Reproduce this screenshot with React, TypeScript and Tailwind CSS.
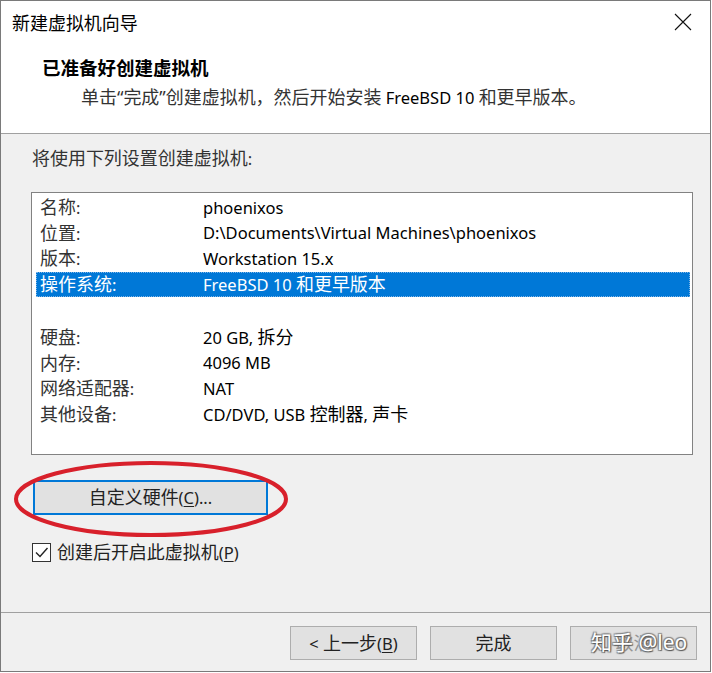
import React from "react";

const font = { fontFamily: '"Noto Sans", "Noto Sans CJK SC", sans-serif' };

function T({ s }: { s: string }) {
  const parts = s.split(/([\u3000-\u9fff\uff00-\uffef“”]+)/);
  return (
    <>
      {parts.map((p, i) =>
        /[\u3000-\u9fff\uff00-\uffef“”]/.test(p) ? (
          <span key={i} className="text-[1.09em]">
            {p}
          </span>
        ) : (
          <React.Fragment key={i}>{p}</React.Fragment>
        )
      )}
    </>
  );
}

const rows: ([string, string] | null)[] = [
  ["名称:", "phoenixos"],
  ["位置:", "D:\\Documents\\Virtual Machines\\phoenixos"],
  ["版本:", "Workstation 15.x"],
  ["操作系统:", "FreeBSD 10 和更早版本"],
  null,
  ["硬盘:", "20 GB, 拆分"],
  ["内存:", "4096 MB"],
  ["网络适配器:", "NAT"],
  ["其他设备:", "CD/DVD, USB 控制器, 声卡"],
];

export default function App() {
  return (
    <div className="w-[712px] h-[673px] bg-white" style={font}>
      <div className="relative w-[711px] h-[672px] border border-[#7a7a7a] flex flex-col bg-[#f0f0f0] text-[#1a1a1a] text-[16.5px]">
        {/* white header */}
        <div className="bg-white h-[133px] border-b border-[#a0a0a0] flex flex-col">
          <div className="h-[44px] flex items-center justify-between pl-[11px] pr-[18px]">
            <span className="text-black leading-[24px]">
              <T s="新建虚拟机向导" />
            </span>
            <svg width="18" height="18" viewBox="0 0 18 18" className="mt-[-2px]">
              <path d="M1 1 L17 17 M17 1 L1 17" stroke="#111" strokeWidth="1.1" />
            </svg>
          </div>
          <div className="pl-[41px] mt-[11px] font-bold text-black leading-[24px] text-[17px]">
            <T s="已准备好创建虚拟机" />
          </div>
          <div className="pl-[80px] mt-[4px] text-[#333] leading-[24px]">
            <T s="单击“完成”创建虚拟机，然后开始安装 " />
            <span className="text-black">FreeBSD 10</span>
            <T s=" 和更早版本。" />
          </div>
        </div>

        {/* body */}
        <div className="flex-1 flex flex-col pl-[30px] pr-[17px]">
          <div className="mt-[12px] text-[#333] leading-[24px] pl-[1px]">
            <T s="将使用下列设置创建虚拟机:" />
          </div>
          <div className="mt-[21px] h-[263px] bg-white border border-[#828282] pt-[2px] pb-[3px] pl-[4px] pr-[2px]">
            {rows.map((r, i) =>
              r ? (
                <div
                  key={i}
                  className={
                    "h-[25.6px] flex items-center leading-[24px] " +
                    (i === 3
                      ? "bg-[#0078d7] text-white outline outline-1 outline-dotted outline-[#7fb5e6] -outline-offset-1"
                      : "text-black")
                  }
                >
                  <span className={"w-[167px] pl-[4px] shrink-0 " + (i === 3 ? "text-white" : "text-[#333]")}>
                    <T s={r[0]} />
                  </span>
                  <span>
                    <T s={r[1]} />
                  </span>
                </div>
              ) : (
                <div key={i} className="h-[27.5px]" />
              )
            )}
          </div>

          <div className="mt-[25px] ml-[2px] w-[235px] h-[35px] bg-[#e1e1e1] border-2 border-[#0078d7] flex items-center justify-center text-[#222] leading-[24px]">
            <span>
              <T s="自定义硬件" />(<span className="underline underline-offset-2">C</span>)...
            </span>
          </div>

          <div className="mt-[25px] flex items-center ml-[1px]">
            <div className="w-[19px] h-[19px] bg-white border border-[#333] flex items-center justify-center">
              <svg width="15" height="15" viewBox="0 0 15 15">
                <path d="M2 7.5 L6 11.5 L13.5 3" fill="none" stroke="#222" strokeWidth="1.4" />
              </svg>
            </div>
            <span className="ml-[6px] text-[#222] leading-[24px]">
              <T s="创建后开启此虚拟机" />(<span className="underline underline-offset-2">P</span>)
            </span>
          </div>
        </div>

        {/* footer */}
        <div className="h-[59px] border-t border-[#a0a0a0] flex items-start justify-end pr-[13px] pt-[13px] gap-[13px]">
          <div className="w-[127px] h-[34px] bg-[#e1e1e1] border border-[#adadad] flex items-center justify-center text-[#222] leading-[24px]">
            <span className="whitespace-pre">
              {"< "}
              <T s="上一步" />(<span className="underline underline-offset-2">B</span>)
            </span>
          </div>
          <div className="w-[127px] h-[34px] bg-[#e1e1e1] border border-[#adadad] flex items-center justify-center text-[#222] leading-[24px]">
            <span>
              <T s="完成" />
            </span>
          </div>
          <div className="relative w-[127px] h-[34px] bg-[#e1e1e1] border border-[#adadad] flex items-center justify-center text-[#222]">
            <span className="opacity-40 leading-[24px]">
              <T s="取消" />
            </span>
            <span
              className="absolute left-[20px] top-[0px] text-[21px] leading-[30px] text-white whitespace-nowrap"
              style={{ textShadow: "1px 1px 1px #555, -1px -1px 1px #888, 1px -1px 1px #888, -1px 1px 1px #888" }}
            >
              知乎 @leo
            </span>
          </div>
        </div>

        {/* red annotation ellipse */}
        <svg className="absolute left-[12px] top-[459px] pointer-events-none" width="280" height="80" viewBox="0 0 280 80">
          <ellipse cx="138" cy="39" rx="135" ry="36" fill="none" stroke="#d8202b" strokeWidth="4" />
        </svg>
      </div>
    </div>
  );
}
